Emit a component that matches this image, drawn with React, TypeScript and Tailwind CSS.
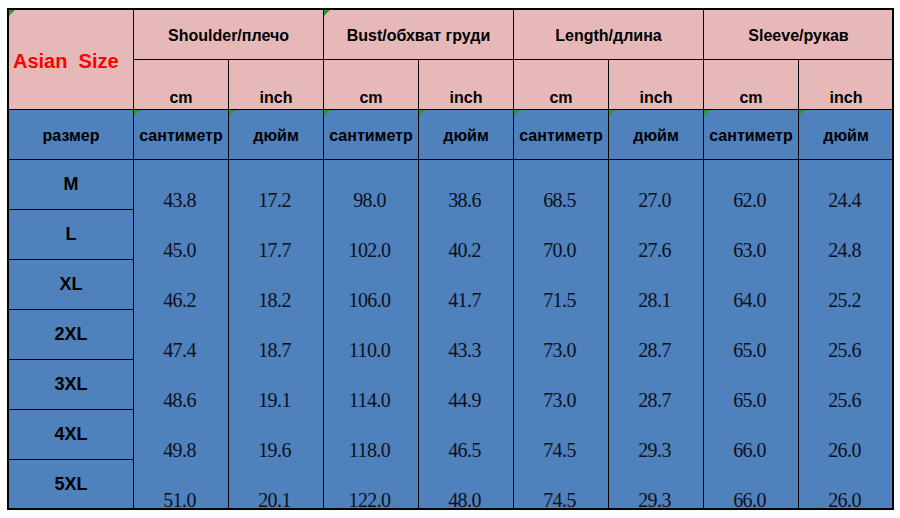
import React from 'react';

type Measure = { title: string; marker?: boolean };

const measures: Measure[] = [
    { title: 'Shoulder/плечо' },
    { title: 'Bust/обхват груди', marker: true },
    { title: 'Length/длина' },
    { title: 'Sleeve/рукав' },
];

const sizes = ['M', 'L', 'XL', '2XL', '3XL', '4XL', '5XL'];

// one array per column, top to bottom
const columns: string[][] = [
    ['43.8', '45.0', '46.2', '47.4', '48.6', '49.8', '51.0'],
    ['17.2', '17.7', '18.2', '18.7', '19.1', '19.6', '20.1'],
    ['98.0', '102.0', '106.0', '110.0', '114.0', '118.0', '122.0'],
    ['38.6', '40.2', '41.7', '43.3', '44.9', '46.5', '48.0'],
    ['68.5', '70.0', '71.5', '73.0', '73.0', '74.5', '74.5'],
    ['27.0', '27.6', '28.1', '28.7', '28.7', '29.3', '29.3'],
    ['62.0', '63.0', '64.0', '65.0', '65.0', '66.0', '66.0'],
    ['24.4', '24.8', '25.2', '25.6', '25.6', '26.0', '26.0'],
];

const Marker: React.FC = () => (
    <span className="absolute left-0 top-0 border-t-[6px] border-r-[6px] border-t-[#2a9a35] border-r-transparent" />
);

const sans = "font-['Liberation_Sans',Arial,sans-serif]";

const App: React.FC = () => {
    return (
        <div className="w-[900px] h-[518px] bg-white pt-[8px] pl-[7px]">
            <div className="w-[887px] border-2 border-black overflow-hidden">
                <div
                    className={`grid grid-cols-[124px_repeat(8,94px)] grid-rows-[repeat(9,49px)_48px] gap-px bg-black ${sans} font-bold text-black`}
                >
                    <div className="relative row-span-2 bg-[#e6b9b8] flex items-center pl-[4px] pt-[3px]">
                        <Marker />
                        <span className="text-[20px] text-[#ff0000] whitespace-pre">Asian  Size</span>
                    </div>
                    {measures.map((m) => (
                        <div key={m.title} className="relative col-span-2 bg-[#e6b9b8] flex items-center justify-center pt-[3px] text-[16px]">
                            {m.marker && <Marker />}
                            {m.title}
                        </div>
                    ))}
                    {measures.map((m) => (
                        <React.Fragment key={m.title + '-units'}>
                            <div className="bg-[#e6b9b8] flex items-end justify-center text-[16px] leading-none pb-[3px]">cm</div>
                            <div className="bg-[#e6b9b8] flex items-end justify-center text-[16px] leading-none pb-[3px]">inch</div>
                        </React.Fragment>
                    ))}

                    <div className="bg-[#4f81bd] flex items-center justify-center pt-[3px] text-[16px]">размер</div>
                    {measures.map((m) => (
                        <React.Fragment key={m.title + '-ru'}>
                            <div className="relative bg-[#4f81bd] flex items-center justify-center pt-[3px] text-[16px]">
                                <Marker />
                                сантиметр
                            </div>
                            <div className="relative bg-[#4f81bd] flex items-center justify-center pt-[3px] text-[16px]">
                                <Marker />
                                дюйм
                            </div>
                        </React.Fragment>
                    ))}

                    {sizes.map((s, i) => (
                        <div
                            key={s}
                            className="bg-[#4f81bd] flex items-center justify-center text-[18px] col-start-1"
                            style={{ gridRowStart: i + 4 }}
                        >
                            {s}
                        </div>
                    ))}

                    {columns.map((values, c) => (
                        <div
                            key={c}
                            className="row-span-7 row-start-4 bg-[#4f81bd] flex flex-col overflow-hidden font-normal font-['Liberation_Serif','Times_New_Roman',serif] text-[20px] text-[#0d1020] tracking-[-0.6px]"
                            style={{ gridColumnStart: c + 2 }}
                        >
                            {values.map((v, r) => (
                                <div key={r} className="h-[50px] shrink-0 flex items-end justify-center pr-[3px] leading-none">
                                    <span>{v}</span>
                                </div>
                            ))}
                        </div>
                    ))}
                </div>
            </div>
        </div>
    );
};

export default App;
